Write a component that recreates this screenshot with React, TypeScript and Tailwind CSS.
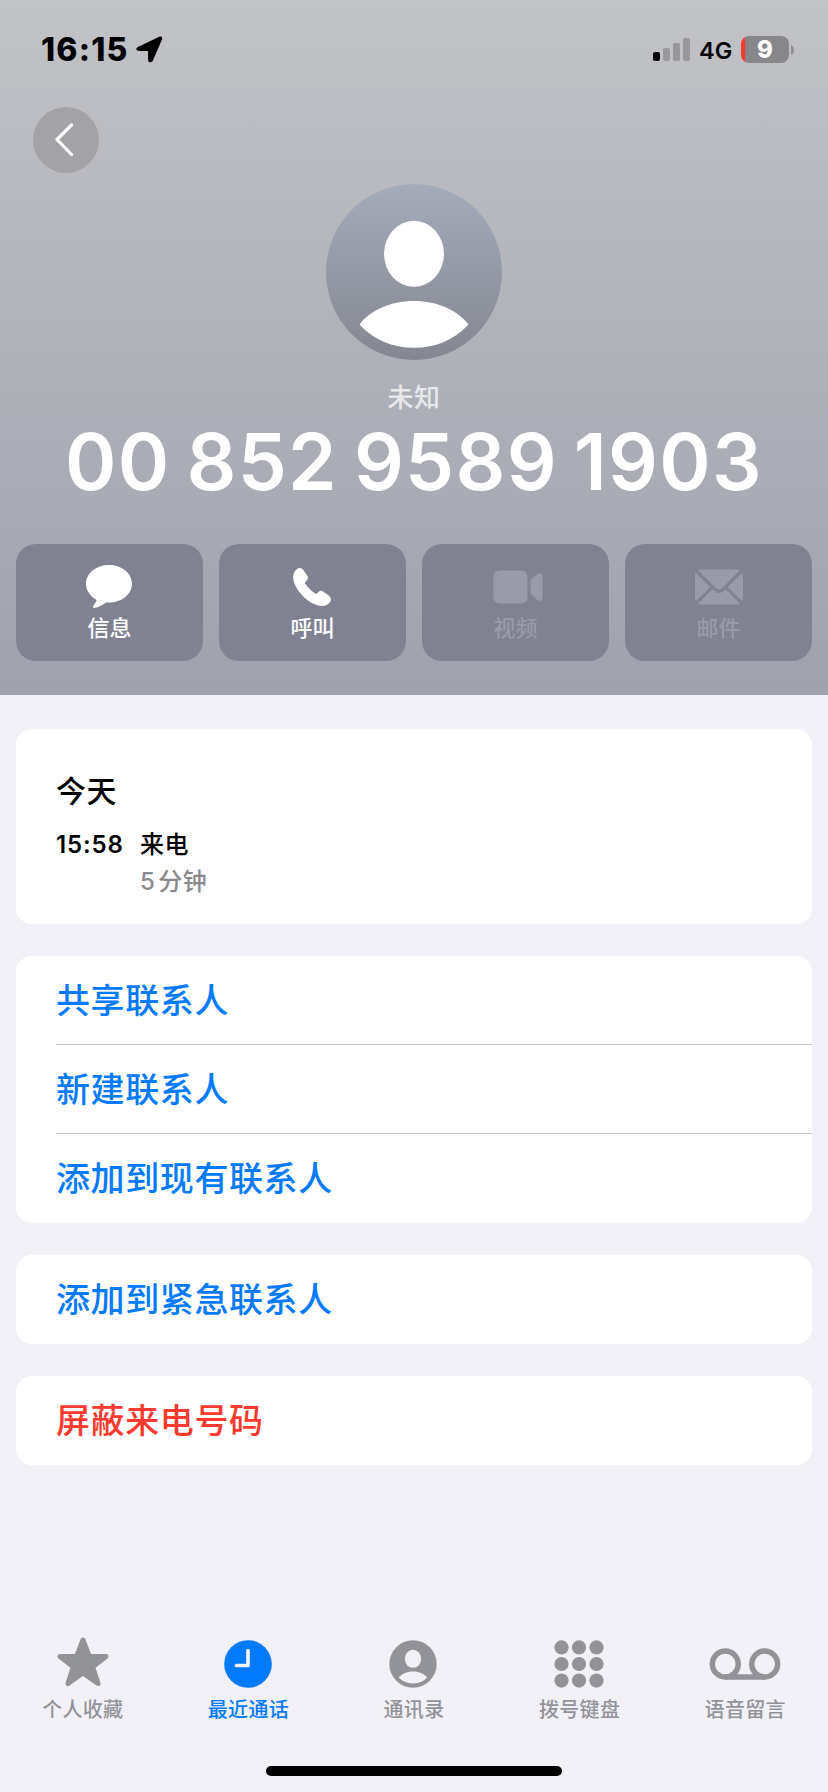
import type { ReactNode } from "react";
import clsx from "clsx";

type Action = {
	label: string;
	icon: ReactNode;
	disabled?: boolean;
};

type Tab = {
	label: string;
	icon: ReactNode;
	active?: boolean;
};

const MessageIcon = () => (
	<svg width="48" height="46" viewBox="0 0 48 46" fill="currentColor" className="mr-[2px]">
		<path d="M24 1C11.300 1 1 9.200 1 19.800c0 6.700 4.300 12.700 10.700 16.200-.3 1.600-1.700 3.600-3.300 5.400-1.100 1.300-.5 2.700 1.300 2.500 4.200-.5 8.300-3.100 11.300-5.400 1 .1 2 .1 3 .1 12.700 0 23-8.200 23-18.800S36.700 1 24 1z" />
	</svg>
);

const PhoneIcon = () => (
	<svg width="40" height="40" viewBox="0 0 40 40" fill="currentColor" className="mr-[2px]">
		<path d="M1.100 9.500C1.100 5.500 4.600 1.200 7.600 1.100c1.700 0 2.900.7 3.900 2.100l3.800 5.600c1 1.600.9 3-.3 4.400l-1.600 1.700c-.5.6-.5 1.100-.1 1.800 2.500 3.700 6 7.200 9.800 9.800.7.500 1.200.4 1.800-.1l1.800-1.600c1.400-1.200 2.900-1.200 4.400-.2l5.600 3.800c1.500 1 2.200 2.300 2.200 4 0 3.100-4.300 6.500-8.500 6.500C17.500 38.900 1.100 22.500 1.100 9.500z" />
	</svg>
);

const VideoIcon = () => (
	<svg width="50" height="34" viewBox="0 0 50 34" fill="currentColor" className="ml-[4px]">
		<rect x="0.500" y="0.500" width="34" height="33" rx="6" />
		<path d="M37.500 11.500c0-1 .3-1.600 1-2.200l6-5.200c2.300-1.900 5-.8 5 1.500v22.800c0 2.300-2.700 3.400-5 1.500l-6-5.200c-.7-.6-1-1.200-1-2.200z" />
	</svg>
);

const MailIcon = () => (
	<svg width="50" height="36" viewBox="0 0 50 36" fill="currentColor">
		<path d="M4 1.300C4.700.700 5.700.500 7 .500h36c1.300 0 2.300.2 3 .8L28.300 18.800c-2.200 2.200-4.400 2.200-6.600 0z" />
		<path d="M1.600 3.800 16.200 18 1.600 32.200c-.4-.7-.6-1.400-.6-2.400V6.200c0-1 .2-1.800.6-2.400z" />
		<path d="M48.400 3.800 33.800 18l14.600 14.200c.4-.7.600-1.400.6-2.400V6.200c0-1-.2-1.800-.6-2.400z" />
		<path d="M4 34.700 18.300 20.200l1.500 1.400c3.300 3.100 7.100 3.100 10.400 0l1.500-1.400L46 34.700c-.7.600-1.700.8-3 .8H7c-1.300 0-2.300-.2-3-.8z" />
	</svg>
);

const StarIcon = () => (
	<svg width="54" height="52" viewBox="0 0 54 52" className="mb-[4px]">
		<path
			d="M27 4l6.300 16.500H50L36.700 30.900 42 47.500 27 37 12 47.500l5.300-16.600L4 20.500h16.700z"
			fill="currentColor"
			stroke="currentColor"
			strokeWidth="5"
			strokeLinejoin="round"
		/>
	</svg>
);

const ClockIcon = () => (
	<svg width="48" height="48" viewBox="0 0 48 48" fill="none">
		<circle cx="24" cy="24" r="23.800" fill="currentColor" />
		<path
			d="M24 10.500v15H12.500"
			stroke="#f2f1f7"
			strokeWidth="3.700"
			strokeLinecap="round"
			strokeLinejoin="round"
		/>
	</svg>
);

const ContactIcon = () => (
	<svg width="48" height="48" viewBox="0 0 48 48" className="mr-[2px]">
		<circle cx="24" cy="24" r="23.700" fill="currentColor" />
		<ellipse cx="24" cy="18.800" rx="8.200" ry="9" fill="#f2f1f7" />
		<path d="M9.800 37.600C12.600 34 17.600 31.500 24 31.500s11.400 2.500 14.200 6.100C34.900 41.200 29.900 43.500 24 43.500S13.100 41.200 9.800 37.600z" fill="#f2f1f7" />
	</svg>
);

const KeypadIcon = () => (
	<svg width="50" height="48" viewBox="0 0 50 48" fill="currentColor" className="mr-[2px]">
		{[7.4, 24, 40.6].map((cy) =>
			[7.5, 25, 42.5].map((cx) => (
				<circle key={`${cx}-${cy}`} cx={cx} cy={cy} r="7.100" />
			)),
		)}
	</svg>
);

const VoicemailIcon = () => (
	<svg
		width="72"
		height="48"
		viewBox="0 0 72 48"
		fill="none"
		stroke="currentColor"
		strokeWidth="5.400"
	>
		<circle cx="16.300" cy="24" r="13" />
		<circle cx="55.700" cy="24" r="13" />
		<path d="M16.300 37h39.400" />
	</svg>
);

const actions: Action[] = [
	{ label: "信息", icon: <MessageIcon /> },
	{ label: "呼叫", icon: <PhoneIcon /> },
	{ label: "视频", icon: <VideoIcon />, disabled: true },
	{ label: "邮件", icon: <MailIcon />, disabled: true },
];

const tabs: Tab[] = [
	{ label: "个人收藏", icon: <StarIcon /> },
	{ label: "最近通话", icon: <ClockIcon />, active: true },
	{ label: "通讯录", icon: <ContactIcon /> },
	{ label: "拨号键盘", icon: <KeypadIcon /> },
	{ label: "语音留言", icon: <VoicemailIcon /> },
];

function StatusBar() {
	return (
		<div className="flex h-[99px] w-full items-center justify-between pr-[34px] pl-[41px] text-black">
			<div className="flex items-center">
				<span className="w-[95px] pt-[1px] text-[32px] leading-none font-extrabold tracking-[1.200px]">16:15</span>
				<svg width="27" height="27" viewBox="0 0 27 27" fill="currentColor">
					<path d="M1.900 11.100 23.200.8c2.100-1 3.700.7 2.800 2.800L16.800 24.800c-1 2.200-4.700 1.900-4.700-.9V15.500c0-.4-.2-.6-.6-.6H3C-.2 14.900-.4 12.200 1.900 11.100z" />
				</svg>
			</div>
			<div className="flex items-center">
				<svg width="38" height="24" viewBox="0 0 38 24">
					<rect x="0" y="14" width="7" height="9" rx="2" />
					<rect x="10" y="10" width="7" height="13" rx="2" fill="#98989b" />
					<rect x="20" y="5" width="7" height="18" rx="2" fill="#98989b" />
					<rect x="30" y="0" width="7" height="23" rx="2" fill="#98989b" />
				</svg>
				<span className="ml-[8px] w-[34px] pt-[2px] text-[23.500px] leading-none font-semibold whitespace-nowrap">
					4G
				</span>
				<div className="ml-2 flex h-[27px] w-[48px] items-center justify-center rounded-[8px] bg-linear-to-r from-[#ff3b30] from-[4px] to-[#87878a] to-[4px] pt-[1px] text-[24px] leading-none font-extrabold text-white">
					9
				</div>
				<svg className="ml-[2px]" width="3" height="10" viewBox="0 0 3 10">
					<path d="M0 0c1.800.8 3 2.700 3 5s-1.200 4.200-3 5z" fill="#8f8f92" />
				</svg>
			</div>
		</div>
	);
}

function Avatar() {
	return (
		<svg width="176" height="176" viewBox="0 0 176 176">
			<defs>
				<linearGradient id="avatar" x1="0" y1="0" x2="0" y2="1">
					<stop offset="0" stopColor="#a4abba" />
					<stop offset="1" stopColor="#848791" />
				</linearGradient>
			</defs>
			<circle cx="88" cy="88" r="88" fill="url(#avatar)" />
			<ellipse cx="88" cy="69.800" rx="30" ry="33" fill="#fff" />
			<path d="M34.500 139.200C45 126.500 64 117 88 117s43 9.500 53.500 22.200c1 1.200.8 1.500-.2 2.500C128 155.500 110 163.800 88 163.800s-40-8.300-53.300-22.100c-1-1-1.200-1.300-.2-2.500z" fill="#fff" />
		</svg>
	);
}

function ListCard({ items, danger }: { items: string[]; danger?: boolean }) {
	return (
		<div className="mt-8 overflow-hidden rounded-[16px] bg-white pl-10">
			{items.map((item, index) => (
				<div
					key={item}
					className={clsx(
						"flex h-[89px] items-center pt-[1px] text-[34px] leading-none font-medium tracking-[0.600px]",
						danger ? "text-[#ff3b30]" : "text-[#007aff]",
						index < items.length - 1 && "border-b border-[#c6c6c8]",
					)}
				>
					{item}
				</div>
			))}
		</div>
	);
}

export default function App() {
	return (
		<div className="flex h-[1792px] w-[828px] flex-col overflow-hidden bg-[#f2f1f7] font-['Inter','Noto_Sans_CJK_SC',sans-serif]">
			<header className="flex h-[695px] shrink-0 flex-col items-center bg-linear-to-b from-[#c2c3c7] via-[#b0b2ba] to-[#9fa1ae]">
				<StatusBar />
				<div className="flex h-[85px] w-full pt-[8px] pl-[33px]">
					<button className="flex size-[66px] items-center justify-center rounded-full bg-[#a2a2a7]">
						<svg width="20" height="34" viewBox="0 0 20 34" fill="none" className="mr-[5px]">
							<path d="M17.500 2 3 16.500 17.500 31.500" stroke="#fff" strokeWidth="3.200" strokeLinecap="round" strokeLinejoin="round" />
						</svg>
					</button>
				</div>
				<Avatar />
				<p className="mt-[24px] text-[26px] leading-[28px] font-medium tracking-[0.500px] text-[#e8e9ec]">未知</p>
				<h1 className="mt-[8px] text-[78px] leading-[84px] font-semibold tracking-[1.300px] [word-spacing:-5px] whitespace-nowrap text-white">
					00 852 9589 1903
				</h1>
				<div className="mt-[40px] flex gap-4">
					{actions.map((action) => (
						<div
							key={action.label}
							className={clsx(
								"flex h-[117px] w-[187px] flex-col items-center rounded-[20px] bg-[#808292] pt-[19px]",
								action.disabled ? "text-[#999ba8]" : "text-white",
							)}
						>
							<div className="flex h-[48px] items-center justify-center">{action.icon}</div>
							<span className="mt-[6px] text-[22px] leading-[22px] font-medium">{action.label}</span>
						</div>
					))}
				</div>
			</header>

			<main className="flex-1 px-4 pt-[34px]">
				<section className="h-[195px] rounded-[16px] bg-white pt-[45px] pl-10">
					<h2 className="text-[30px] leading-[34px] font-medium tracking-[0.500px] text-black">今天</h2>
					<div className="mt-[25px] flex text-[24px] leading-[24px] tracking-[0.500px]">
						<span className="w-[84px] font-semibold tracking-[0.900px] text-black">15:58</span>
						<div>
							<p className="font-medium text-black">来电</p>
							<p className="mt-[13px] font-medium text-[#8a8a8e] [word-spacing:-4px]">5 分钟</p>
						</div>
					</div>
				</section>
				<ListCard items={["共享联系人", "新建联系人", "添加到现有联系人"]} />
				<ListCard items={["添加到紧急联系人"]} />
				<ListCard items={["屏蔽来电号码"]} danger />
			</main>

			<nav className="grid h-[130px] grid-cols-5">
				{tabs.map((tab) => (
					<div
						key={tab.label}
						className={clsx(
							"flex flex-col items-center",
							tab.active ? "text-[#007aff]" : "text-[#929398]",
						)}
					>
						<div className="flex h-[55px] items-center justify-center">{tab.icon}</div>
						<span className="mt-[9px] text-[20px] leading-[20px] font-medium tracking-[0.300px]">
							{tab.label}
						</span>
					</div>
				))}
			</nav>
			<div className="mx-auto mb-[16px] h-[10px] w-[296px] rounded-full bg-black" />
		</div>
	);
}
